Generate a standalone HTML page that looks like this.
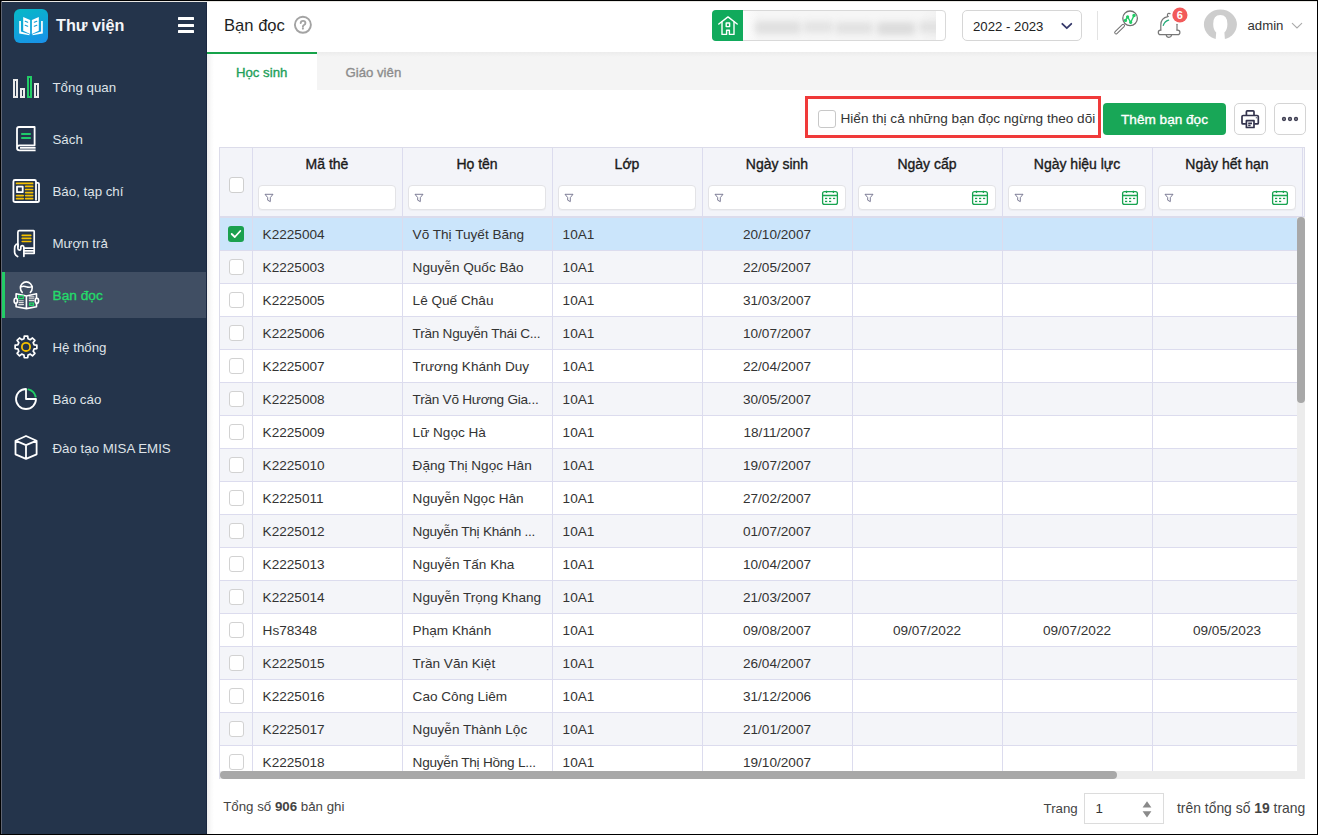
<!DOCTYPE html>
<html><head><meta charset="utf-8"><style>
html,body{margin:0;padding:0;width:1318px;height:835px;overflow:hidden;background:#fff;}
body{position:relative;font-family:"Liberation Sans", sans-serif;}
.t{position:absolute;white-space:nowrap;}
.r{position:absolute;}
.ov{position:absolute;left:0;top:0;}
b{font-weight:700;}
</style></head><body>
<div class="r" style="left:0px;top:0px;width:207px;height:835px;background:#24344b;"></div><div class="r" style="left:1px;top:272px;width:206px;height:46px;background:#404e63;"></div><div class="r" style="left:1px;top:272px;width:4px;height:46px;background:#22cc66;"></div><div class="r" style="left:14px;top:9px;width:34px;height:34px;background:linear-gradient(160deg,#07b9c6 0%,#10a3da 55%,#1a8fea 100%);border-radius:6px;"></div><div class="t" style="left:56px;top:17.49px;font-size:16.2px;font-weight:700;color:#f4f6f8;line-height:16.2px;">Thư viện</div><div class="r" style="left:178px;top:17px;width:16px;height:2.9px;background:#ffffff;border-radius:0.5px;"></div><div class="r" style="left:178px;top:23.7px;width:16px;height:2.9px;background:#ffffff;border-radius:0.5px;"></div><div class="r" style="left:178px;top:30.4px;width:16px;height:2.9px;background:#ffffff;border-radius:0.5px;"></div><div class="t" style="left:52.5px;top:81.44px;font-size:13.3px;font-weight:400;color:#dfe3e8;line-height:13.3px;">Tổng quan</div><div class="t" style="left:52.5px;top:132.94px;font-size:13.3px;font-weight:400;color:#dfe3e8;line-height:13.3px;">Sách</div><div class="t" style="left:52.5px;top:184.64px;font-size:13.3px;font-weight:400;color:#dfe3e8;line-height:13.3px;">Báo, tạp chí</div><div class="t" style="left:52.5px;top:237.34px;font-size:13.3px;font-weight:400;color:#dfe3e8;line-height:13.3px;">Mượn trả</div><div class="t" style="left:52.5px;top:289.20px;font-size:13.7px;font-weight:400;-webkit-text-stroke:0.35px #24dc6a;color:#24dc6a;line-height:13.7px;">Bạn đọc</div><div class="t" style="left:52.5px;top:341.04px;font-size:13.3px;font-weight:400;color:#dfe3e8;line-height:13.3px;">Hệ thống</div><div class="t" style="left:52.5px;top:393.24px;font-size:13.3px;font-weight:400;color:#dfe3e8;line-height:13.3px;">Báo cáo</div><div class="t" style="left:52.5px;top:441.64px;font-size:13.3px;font-weight:400;color:#dfe3e8;line-height:13.3px;">Đào tạo MISA EMIS</div><div class="r" style="left:207px;top:0px;width:1111px;height:52px;background:#ffffff;"></div><div class="t" style="left:224px;top:17.95px;font-size:16.6px;font-weight:400;color:#1f1f1f;line-height:16.6px;">Bạn đọc</div><div class="r" style="left:207px;top:52px;width:1111px;height:38px;background:#f4f4f4;"></div><div class="r" style="left:207px;top:52px;width:1111px;height:5px;background:linear-gradient(#ececec,#f4f4f4);"></div><div class="r" style="left:207px;top:52px;width:110px;height:38px;background:#ffffff;"></div><div class="r" style="left:207px;top:52px;width:110px;height:2px;background:#16a34a;"></div><div class="t" style="left:236px;top:66.23px;font-size:13.2px;font-weight:400;-webkit-text-stroke:0.35px #1ea05a;color:#1ea05a;line-height:13.2px;">Học sinh</div><div class="t" style="left:345.5px;top:65.73px;font-size:13.2px;font-weight:400;-webkit-text-stroke:0.35px #8c8c8c;color:#8c8c8c;line-height:13.2px;">Giáo viên</div><div class="r" style="left:207px;top:90px;width:1111px;height:745px;background:#ffffff;"></div><div class="r" style="left:711.5px;top:10px;width:234px;height:31px;background:#ffffff;border:1px solid #d9d9d9;border-radius:4px;box-sizing:border-box;"></div><div class="r" style="left:711.5px;top:10px;width:31.5px;height:31px;background:#11aa5c;border-radius:4px 0 0 4px;"></div><div class="r" style="left:743px;top:11px;width:193px;height:29px;overflow:hidden;background:linear-gradient(90deg,#fdfdfd,#f6f6f6 8%,#f6f6f6 92%,#f2f2f2)"><div class="r" style="left:12px;top:10px;width:46px;height:13px;background:#e0e0e0;filter:blur(3px);border-radius:4px"></div><div class="r" style="left:60px;top:10px;width:30px;height:12px;background:#e4e4e4;filter:blur(3px);border-radius:4px"></div><div class="r" style="left:92px;top:11px;width:38px;height:12px;background:#e2e2e2;filter:blur(3px);border-radius:4px"></div><div class="r" style="left:134px;top:11px;width:38px;height:13px;background:#dcdcdc;filter:blur(3px);border-radius:4px"></div><div class="r" style="left:176px;top:10px;width:26px;height:12px;background:#e2e2e2;filter:blur(3px);border-radius:4px"></div></div><div class="r" style="left:962px;top:10px;width:120px;height:31px;background:#ffffff;border:1px solid #d6d6d6;border-radius:5px;box-sizing:border-box;"></div><div class="t" style="left:973px;top:19.93px;font-size:13.2px;font-weight:400;color:#222;line-height:13.2px;">2022 - 2023</div><div class="r" style="left:1097px;top:11px;width:1px;height:29px;background:#e3e3e3;"></div><div class="t" style="left:1247.5px;top:19.43px;font-size:13.2px;font-weight:400;color:#333;line-height:13.2px;">admin</div><div class="r" style="left:805px;top:96px;width:296px;height:42px;background:transparent;border:3px solid #f03a3a;box-sizing:border-box;"></div><div class="r" style="left:818px;top:110px;width:17.5px;height:17.5px;background:#fff;border:1px solid #c8c8c8;border-radius:3px;box-sizing:border-box;"></div><div class="t" style="left:840.5px;top:112.09px;font-size:13.6px;font-weight:400;color:#333;line-height:13.6px;">Hiển thị cả những bạn đọc ngừng theo dõi</div><div class="r" style="left:1103px;top:103px;width:123px;height:32px;background:#18a757;border-radius:4px;"></div><div class="t" style="left:1103px;top:112.69px;font-size:13.6px;font-weight:400;-webkit-text-stroke:0.35px #ffffff;color:#ffffff;line-height:13.6px;width:123px;text-align:center;">Thêm bạn đọc</div><div class="r" style="left:1234px;top:103px;width:32px;height:32px;background:#fff;border:1px solid #d4d4d4;border-radius:5px;box-sizing:border-box;"></div><div class="r" style="left:1274px;top:103px;width:32px;height:32px;background:#fff;border:1px solid #d4d4d4;border-radius:5px;box-sizing:border-box;"></div><div class="r" style="left:219px;top:147px;width:1086px;height:632px;background:#ffffff;border:1px solid #dcdcea;box-sizing:border-box;"></div><div class="r" style="left:220px;top:148px;width:1084px;height:69px;background:#f3f4f9;"></div><div class="t" style="left:252px;top:157.15px;font-size:14px;font-weight:400;-webkit-text-stroke:0.35px #1a1a1a;color:#1a1a1a;line-height:14px;width:150px;text-align:center;">Mã thẻ</div><div class="r" style="left:258px;top:185px;width:138px;height:25px;background:#ffffff;border:1px solid #e3e3e6;border-radius:4px;box-sizing:border-box;box-shadow:0 1px 1px rgba(0,0,0,0.03);"></div><div class="t" style="left:402px;top:157.15px;font-size:14px;font-weight:400;-webkit-text-stroke:0.35px #1a1a1a;color:#1a1a1a;line-height:14px;width:150px;text-align:center;">Họ tên</div><div class="r" style="left:408px;top:185px;width:138px;height:25px;background:#ffffff;border:1px solid #e3e3e6;border-radius:4px;box-sizing:border-box;box-shadow:0 1px 1px rgba(0,0,0,0.03);"></div><div class="t" style="left:552px;top:157.15px;font-size:14px;font-weight:400;-webkit-text-stroke:0.35px #1a1a1a;color:#1a1a1a;line-height:14px;width:150px;text-align:center;">Lớp</div><div class="r" style="left:558px;top:185px;width:138px;height:25px;background:#ffffff;border:1px solid #e3e3e6;border-radius:4px;box-sizing:border-box;box-shadow:0 1px 1px rgba(0,0,0,0.03);"></div><div class="t" style="left:702px;top:157.15px;font-size:14px;font-weight:400;-webkit-text-stroke:0.35px #1a1a1a;color:#1a1a1a;line-height:14px;width:150px;text-align:center;">Ngày sinh</div><div class="r" style="left:708px;top:185px;width:138px;height:25px;background:#ffffff;border:1px solid #e3e3e6;border-radius:4px;box-sizing:border-box;box-shadow:0 1px 1px rgba(0,0,0,0.03);"></div><div class="t" style="left:852px;top:157.15px;font-size:14px;font-weight:400;-webkit-text-stroke:0.35px #1a1a1a;color:#1a1a1a;line-height:14px;width:150px;text-align:center;">Ngày cấp</div><div class="r" style="left:858px;top:185px;width:138px;height:25px;background:#ffffff;border:1px solid #e3e3e6;border-radius:4px;box-sizing:border-box;box-shadow:0 1px 1px rgba(0,0,0,0.03);"></div><div class="t" style="left:1002px;top:157.15px;font-size:14px;font-weight:400;-webkit-text-stroke:0.35px #1a1a1a;color:#1a1a1a;line-height:14px;width:150px;text-align:center;">Ngày hiệu lực</div><div class="r" style="left:1008px;top:185px;width:138px;height:25px;background:#ffffff;border:1px solid #e3e3e6;border-radius:4px;box-sizing:border-box;box-shadow:0 1px 1px rgba(0,0,0,0.03);"></div><div class="t" style="left:1152px;top:157.15px;font-size:14px;font-weight:400;-webkit-text-stroke:0.35px #1a1a1a;color:#1a1a1a;line-height:14px;width:150px;text-align:center;">Ngày hết hạn</div><div class="r" style="left:1158px;top:185px;width:138px;height:25px;background:#ffffff;border:1px solid #e3e3e6;border-radius:4px;box-sizing:border-box;box-shadow:0 1px 1px rgba(0,0,0,0.03);"></div><div class="r" style="left:228.5px;top:177px;width:15.5px;height:15.5px;background:#fff;border:1px solid #cfcfcf;border-radius:3px;box-sizing:border-box;"></div><div class="r" style="left:220px;top:217px;width:1084px;height:33px;background:#cbe5fb;"></div><div class="t" style="left:262.6px;top:228.39px;font-size:13.6px;font-weight:400;color:#333;line-height:13.6px;">K2225004</div><div class="t" style="left:412.6px;top:228.39px;font-size:13.6px;font-weight:400;color:#333;line-height:13.6px;">Võ Thị Tuyết Băng</div><div class="t" style="left:562.6px;top:228.39px;font-size:13.6px;font-weight:400;color:#333;line-height:13.6px;">10A1</div><div class="t" style="left:702px;top:228.39px;font-size:13.6px;font-weight:400;color:#333;line-height:13.6px;width:150px;text-align:center;">20/10/2007</div><div class="r" style="left:228px;top:226px;width:16px;height:16px;background:#1aa14f;border-radius:3px;"></div><div class="r" style="left:220px;top:250px;width:1084px;height:33px;background:#f4f5f9;"></div><div class="r" style="left:220px;top:250px;width:1084px;height:1px;background:#dcdcee;"></div><div class="t" style="left:262.6px;top:261.39px;font-size:13.6px;font-weight:400;color:#333;line-height:13.6px;">K2225003</div><div class="t" style="left:412.6px;top:261.39px;font-size:13.6px;font-weight:400;color:#333;line-height:13.6px;">Nguyễn Quốc Bảo</div><div class="t" style="left:562.6px;top:261.39px;font-size:13.6px;font-weight:400;color:#333;line-height:13.6px;">10A1</div><div class="t" style="left:702px;top:261.39px;font-size:13.6px;font-weight:400;color:#333;line-height:13.6px;width:150px;text-align:center;">22/05/2007</div><div class="r" style="left:228.5px;top:259px;width:15.5px;height:15.5px;background:#fff;border:1px solid #d2d2d2;border-radius:3px;box-sizing:border-box;"></div><div class="r" style="left:220px;top:283px;width:1084px;height:33px;background:#ffffff;"></div><div class="r" style="left:220px;top:283px;width:1084px;height:1px;background:#dcdcee;"></div><div class="t" style="left:262.6px;top:294.39px;font-size:13.6px;font-weight:400;color:#333;line-height:13.6px;">K2225005</div><div class="t" style="left:412.6px;top:294.39px;font-size:13.6px;font-weight:400;color:#333;line-height:13.6px;">Lê Quế Châu</div><div class="t" style="left:562.6px;top:294.39px;font-size:13.6px;font-weight:400;color:#333;line-height:13.6px;">10A1</div><div class="t" style="left:702px;top:294.39px;font-size:13.6px;font-weight:400;color:#333;line-height:13.6px;width:150px;text-align:center;">31/03/2007</div><div class="r" style="left:228.5px;top:292px;width:15.5px;height:15.5px;background:#fff;border:1px solid #d2d2d2;border-radius:3px;box-sizing:border-box;"></div><div class="r" style="left:220px;top:316px;width:1084px;height:33px;background:#f4f5f9;"></div><div class="r" style="left:220px;top:316px;width:1084px;height:1px;background:#dcdcee;"></div><div class="t" style="left:262.6px;top:327.39px;font-size:13.6px;font-weight:400;color:#333;line-height:13.6px;">K2225006</div><div class="t" style="left:412.6px;top:327.39px;font-size:13.6px;font-weight:400;color:#333;line-height:13.6px;letter-spacing:-0.25px;">Trần Nguyễn Thái C...</div><div class="t" style="left:562.6px;top:327.39px;font-size:13.6px;font-weight:400;color:#333;line-height:13.6px;">10A1</div><div class="t" style="left:702px;top:327.39px;font-size:13.6px;font-weight:400;color:#333;line-height:13.6px;width:150px;text-align:center;">10/07/2007</div><div class="r" style="left:228.5px;top:325px;width:15.5px;height:15.5px;background:#fff;border:1px solid #d2d2d2;border-radius:3px;box-sizing:border-box;"></div><div class="r" style="left:220px;top:349px;width:1084px;height:33px;background:#ffffff;"></div><div class="r" style="left:220px;top:349px;width:1084px;height:1px;background:#dcdcee;"></div><div class="t" style="left:262.6px;top:360.39px;font-size:13.6px;font-weight:400;color:#333;line-height:13.6px;">K2225007</div><div class="t" style="left:412.6px;top:360.39px;font-size:13.6px;font-weight:400;color:#333;line-height:13.6px;">Trương Khánh Duy</div><div class="t" style="left:562.6px;top:360.39px;font-size:13.6px;font-weight:400;color:#333;line-height:13.6px;">10A1</div><div class="t" style="left:702px;top:360.39px;font-size:13.6px;font-weight:400;color:#333;line-height:13.6px;width:150px;text-align:center;">22/04/2007</div><div class="r" style="left:228.5px;top:358px;width:15.5px;height:15.5px;background:#fff;border:1px solid #d2d2d2;border-radius:3px;box-sizing:border-box;"></div><div class="r" style="left:220px;top:382px;width:1084px;height:33px;background:#f4f5f9;"></div><div class="r" style="left:220px;top:382px;width:1084px;height:1px;background:#dcdcee;"></div><div class="t" style="left:262.6px;top:393.39px;font-size:13.6px;font-weight:400;color:#333;line-height:13.6px;">K2225008</div><div class="t" style="left:412.6px;top:393.39px;font-size:13.6px;font-weight:400;color:#333;line-height:13.6px;letter-spacing:-0.25px;">Trần Võ Hương Gia...</div><div class="t" style="left:562.6px;top:393.39px;font-size:13.6px;font-weight:400;color:#333;line-height:13.6px;">10A1</div><div class="t" style="left:702px;top:393.39px;font-size:13.6px;font-weight:400;color:#333;line-height:13.6px;width:150px;text-align:center;">30/05/2007</div><div class="r" style="left:228.5px;top:391px;width:15.5px;height:15.5px;background:#fff;border:1px solid #d2d2d2;border-radius:3px;box-sizing:border-box;"></div><div class="r" style="left:220px;top:415px;width:1084px;height:33px;background:#ffffff;"></div><div class="r" style="left:220px;top:415px;width:1084px;height:1px;background:#dcdcee;"></div><div class="t" style="left:262.6px;top:426.39px;font-size:13.6px;font-weight:400;color:#333;line-height:13.6px;">K2225009</div><div class="t" style="left:412.6px;top:426.39px;font-size:13.6px;font-weight:400;color:#333;line-height:13.6px;">Lữ Ngọc Hà</div><div class="t" style="left:562.6px;top:426.39px;font-size:13.6px;font-weight:400;color:#333;line-height:13.6px;">10A1</div><div class="t" style="left:702px;top:426.39px;font-size:13.6px;font-weight:400;color:#333;line-height:13.6px;width:150px;text-align:center;">18/11/2007</div><div class="r" style="left:228.5px;top:424px;width:15.5px;height:15.5px;background:#fff;border:1px solid #d2d2d2;border-radius:3px;box-sizing:border-box;"></div><div class="r" style="left:220px;top:448px;width:1084px;height:33px;background:#f4f5f9;"></div><div class="r" style="left:220px;top:448px;width:1084px;height:1px;background:#dcdcee;"></div><div class="t" style="left:262.6px;top:459.39px;font-size:13.6px;font-weight:400;color:#333;line-height:13.6px;">K2225010</div><div class="t" style="left:412.6px;top:459.39px;font-size:13.6px;font-weight:400;color:#333;line-height:13.6px;">Đặng Thị Ngọc Hân</div><div class="t" style="left:562.6px;top:459.39px;font-size:13.6px;font-weight:400;color:#333;line-height:13.6px;">10A1</div><div class="t" style="left:702px;top:459.39px;font-size:13.6px;font-weight:400;color:#333;line-height:13.6px;width:150px;text-align:center;">19/07/2007</div><div class="r" style="left:228.5px;top:457px;width:15.5px;height:15.5px;background:#fff;border:1px solid #d2d2d2;border-radius:3px;box-sizing:border-box;"></div><div class="r" style="left:220px;top:481px;width:1084px;height:33px;background:#ffffff;"></div><div class="r" style="left:220px;top:481px;width:1084px;height:1px;background:#dcdcee;"></div><div class="t" style="left:262.6px;top:492.39px;font-size:13.6px;font-weight:400;color:#333;line-height:13.6px;">K2225011</div><div class="t" style="left:412.6px;top:492.39px;font-size:13.6px;font-weight:400;color:#333;line-height:13.6px;">Nguyễn Ngọc Hân</div><div class="t" style="left:562.6px;top:492.39px;font-size:13.6px;font-weight:400;color:#333;line-height:13.6px;">10A1</div><div class="t" style="left:702px;top:492.39px;font-size:13.6px;font-weight:400;color:#333;line-height:13.6px;width:150px;text-align:center;">27/02/2007</div><div class="r" style="left:228.5px;top:490px;width:15.5px;height:15.5px;background:#fff;border:1px solid #d2d2d2;border-radius:3px;box-sizing:border-box;"></div><div class="r" style="left:220px;top:514px;width:1084px;height:33px;background:#f4f5f9;"></div><div class="r" style="left:220px;top:514px;width:1084px;height:1px;background:#dcdcee;"></div><div class="t" style="left:262.6px;top:525.39px;font-size:13.6px;font-weight:400;color:#333;line-height:13.6px;">K2225012</div><div class="t" style="left:412.6px;top:525.39px;font-size:13.6px;font-weight:400;color:#333;line-height:13.6px;letter-spacing:-0.25px;">Nguyễn Thị Khánh ...</div><div class="t" style="left:562.6px;top:525.39px;font-size:13.6px;font-weight:400;color:#333;line-height:13.6px;">10A1</div><div class="t" style="left:702px;top:525.39px;font-size:13.6px;font-weight:400;color:#333;line-height:13.6px;width:150px;text-align:center;">01/07/2007</div><div class="r" style="left:228.5px;top:523px;width:15.5px;height:15.5px;background:#fff;border:1px solid #d2d2d2;border-radius:3px;box-sizing:border-box;"></div><div class="r" style="left:220px;top:547px;width:1084px;height:33px;background:#ffffff;"></div><div class="r" style="left:220px;top:547px;width:1084px;height:1px;background:#dcdcee;"></div><div class="t" style="left:262.6px;top:558.39px;font-size:13.6px;font-weight:400;color:#333;line-height:13.6px;">K2225013</div><div class="t" style="left:412.6px;top:558.39px;font-size:13.6px;font-weight:400;color:#333;line-height:13.6px;">Nguyễn Tấn Kha</div><div class="t" style="left:562.6px;top:558.39px;font-size:13.6px;font-weight:400;color:#333;line-height:13.6px;">10A1</div><div class="t" style="left:702px;top:558.39px;font-size:13.6px;font-weight:400;color:#333;line-height:13.6px;width:150px;text-align:center;">10/04/2007</div><div class="r" style="left:228.5px;top:556px;width:15.5px;height:15.5px;background:#fff;border:1px solid #d2d2d2;border-radius:3px;box-sizing:border-box;"></div><div class="r" style="left:220px;top:580px;width:1084px;height:33px;background:#f4f5f9;"></div><div class="r" style="left:220px;top:580px;width:1084px;height:1px;background:#dcdcee;"></div><div class="t" style="left:262.6px;top:591.39px;font-size:13.6px;font-weight:400;color:#333;line-height:13.6px;">K2225014</div><div class="t" style="left:412.6px;top:591.39px;font-size:13.6px;font-weight:400;color:#333;line-height:13.6px;">Nguyễn Trọng Khang</div><div class="t" style="left:562.6px;top:591.39px;font-size:13.6px;font-weight:400;color:#333;line-height:13.6px;">10A1</div><div class="t" style="left:702px;top:591.39px;font-size:13.6px;font-weight:400;color:#333;line-height:13.6px;width:150px;text-align:center;">21/03/2007</div><div class="r" style="left:228.5px;top:589px;width:15.5px;height:15.5px;background:#fff;border:1px solid #d2d2d2;border-radius:3px;box-sizing:border-box;"></div><div class="r" style="left:220px;top:613px;width:1084px;height:33px;background:#ffffff;"></div><div class="r" style="left:220px;top:613px;width:1084px;height:1px;background:#dcdcee;"></div><div class="t" style="left:262.6px;top:624.39px;font-size:13.6px;font-weight:400;color:#333;line-height:13.6px;">Hs78348</div><div class="t" style="left:412.6px;top:624.39px;font-size:13.6px;font-weight:400;color:#333;line-height:13.6px;">Phạm Khánh</div><div class="t" style="left:562.6px;top:624.39px;font-size:13.6px;font-weight:400;color:#333;line-height:13.6px;">10A1</div><div class="t" style="left:702px;top:624.39px;font-size:13.6px;font-weight:400;color:#333;line-height:13.6px;width:150px;text-align:center;">09/08/2007</div><div class="t" style="left:852px;top:624.39px;font-size:13.6px;font-weight:400;color:#333;line-height:13.6px;width:150px;text-align:center;">09/07/2022</div><div class="t" style="left:1002px;top:624.39px;font-size:13.6px;font-weight:400;color:#333;line-height:13.6px;width:150px;text-align:center;">09/07/2022</div><div class="t" style="left:1152px;top:624.39px;font-size:13.6px;font-weight:400;color:#333;line-height:13.6px;width:150px;text-align:center;">09/05/2023</div><div class="r" style="left:228.5px;top:622px;width:15.5px;height:15.5px;background:#fff;border:1px solid #d2d2d2;border-radius:3px;box-sizing:border-box;"></div><div class="r" style="left:220px;top:646px;width:1084px;height:33px;background:#f4f5f9;"></div><div class="r" style="left:220px;top:646px;width:1084px;height:1px;background:#dcdcee;"></div><div class="t" style="left:262.6px;top:657.39px;font-size:13.6px;font-weight:400;color:#333;line-height:13.6px;">K2225015</div><div class="t" style="left:412.6px;top:657.39px;font-size:13.6px;font-weight:400;color:#333;line-height:13.6px;">Trần Văn Kiệt</div><div class="t" style="left:562.6px;top:657.39px;font-size:13.6px;font-weight:400;color:#333;line-height:13.6px;">10A1</div><div class="t" style="left:702px;top:657.39px;font-size:13.6px;font-weight:400;color:#333;line-height:13.6px;width:150px;text-align:center;">26/04/2007</div><div class="r" style="left:228.5px;top:655px;width:15.5px;height:15.5px;background:#fff;border:1px solid #d2d2d2;border-radius:3px;box-sizing:border-box;"></div><div class="r" style="left:220px;top:679px;width:1084px;height:33px;background:#ffffff;"></div><div class="r" style="left:220px;top:679px;width:1084px;height:1px;background:#dcdcee;"></div><div class="t" style="left:262.6px;top:690.39px;font-size:13.6px;font-weight:400;color:#333;line-height:13.6px;">K2225016</div><div class="t" style="left:412.6px;top:690.39px;font-size:13.6px;font-weight:400;color:#333;line-height:13.6px;">Cao Công Liêm</div><div class="t" style="left:562.6px;top:690.39px;font-size:13.6px;font-weight:400;color:#333;line-height:13.6px;">10A1</div><div class="t" style="left:702px;top:690.39px;font-size:13.6px;font-weight:400;color:#333;line-height:13.6px;width:150px;text-align:center;">31/12/2006</div><div class="r" style="left:228.5px;top:688px;width:15.5px;height:15.5px;background:#fff;border:1px solid #d2d2d2;border-radius:3px;box-sizing:border-box;"></div><div class="r" style="left:220px;top:712px;width:1084px;height:33px;background:#f4f5f9;"></div><div class="r" style="left:220px;top:712px;width:1084px;height:1px;background:#dcdcee;"></div><div class="t" style="left:262.6px;top:723.39px;font-size:13.6px;font-weight:400;color:#333;line-height:13.6px;">K2225017</div><div class="t" style="left:412.6px;top:723.39px;font-size:13.6px;font-weight:400;color:#333;line-height:13.6px;">Nguyễn Thành Lộc</div><div class="t" style="left:562.6px;top:723.39px;font-size:13.6px;font-weight:400;color:#333;line-height:13.6px;">10A1</div><div class="t" style="left:702px;top:723.39px;font-size:13.6px;font-weight:400;color:#333;line-height:13.6px;width:150px;text-align:center;">21/01/2007</div><div class="r" style="left:228.5px;top:721px;width:15.5px;height:15.5px;background:#fff;border:1px solid #d2d2d2;border-radius:3px;box-sizing:border-box;"></div><div class="r" style="left:220px;top:745px;width:1084px;height:33px;background:#ffffff;"></div><div class="r" style="left:220px;top:745px;width:1084px;height:1px;background:#dcdcee;"></div><div class="t" style="left:262.6px;top:756.39px;font-size:13.6px;font-weight:400;color:#333;line-height:13.6px;">K2225018</div><div class="t" style="left:412.6px;top:756.39px;font-size:13.6px;font-weight:400;color:#333;line-height:13.6px;letter-spacing:-0.25px;">Nguyễn Thị Hồng L...</div><div class="t" style="left:562.6px;top:756.39px;font-size:13.6px;font-weight:400;color:#333;line-height:13.6px;">10A1</div><div class="t" style="left:702px;top:756.39px;font-size:13.6px;font-weight:400;color:#333;line-height:13.6px;width:150px;text-align:center;">19/10/2007</div><div class="r" style="left:228.5px;top:754px;width:15.5px;height:15.5px;background:#fff;border:1px solid #d2d2d2;border-radius:3px;box-sizing:border-box;"></div><div class="r" style="left:220px;top:216px;width:1084px;height:1.5px;background:#dcdcec;"></div><div class="r" style="left:252px;top:148px;width:1px;height:630px;background:#dcdcee;"></div><div class="r" style="left:402px;top:148px;width:1px;height:630px;background:#dcdcee;"></div><div class="r" style="left:552px;top:148px;width:1px;height:630px;background:#dcdcee;"></div><div class="r" style="left:702px;top:148px;width:1px;height:630px;background:#dcdcee;"></div><div class="r" style="left:852px;top:148px;width:1px;height:630px;background:#dcdcee;"></div><div class="r" style="left:1002px;top:148px;width:1px;height:630px;background:#dcdcee;"></div><div class="r" style="left:1152px;top:148px;width:1px;height:630px;background:#dcdcee;"></div><div class="r" style="left:1302px;top:148px;width:1px;height:630px;background:#dcdcee;"></div><div class="r" style="left:220px;top:771px;width:1077px;height:8px;background:#ececec;"></div><div class="r" style="left:220px;top:771px;width:897px;height:8px;background:#a8a8a8;border-radius:4px;"></div><div class="r" style="left:1297px;top:217px;width:8px;height:562px;background:#ececec;"></div><div class="r" style="left:1297px;top:217px;width:8px;height:186px;background:#a8a8a8;border-radius:4px;"></div><div class="t" style="left:223.2px;top:800.34px;font-size:13.3px;font-weight:400;color:#444;line-height:13.3px;">Tổng số <b>906</b> bản ghi</div><div class="t" style="left:1043.5px;top:802.34px;font-size:13.3px;font-weight:400;color:#444;line-height:13.3px;">Trang</div><div class="r" style="left:1084px;top:793px;width:80px;height:31px;background:#fff;border:1px solid #dcdcdc;box-sizing:border-box;"></div><div class="t" style="left:1095.5px;top:802.34px;font-size:13.3px;font-weight:400;color:#333;line-height:13.3px;">1</div><div class="t" style="left:1177px;top:801.83px;font-size:13.9px;font-weight:400;color:#444;line-height:13.9px;">trên tổng số <b>19</b> trang</div><svg class="ov" width="1318" height="835" viewBox="0 0 1318 835"><rect x="14" y="80" width="3" height="17" fill="none" stroke="#eaeaea" stroke-width="2"/><rect x="21" y="89" width="3" height="8" fill="none" stroke="#eaeaea" stroke-width="2"/><rect x="28" y="77" width="3" height="20" fill="none" stroke="#22cc66" stroke-width="2"/><rect x="35" y="84" width="3" height="13" fill="none" stroke="#eaeaea" stroke-width="2"/><g transform="translate(14,9)" fill="#ffffff"><path d="M9.2 8 L16.1 11 L16.1 25 L9.2 21.8 Z"/><path d="M24.8 8 L17.9 11 L17.9 25 L24.8 21.8 Z"/><path d="M5.2 12 H6.9 V22.6 L15.5 25.2 V26.3 L5.2 24.6 Z"/><path d="M28.8 12 H27.1 V22.6 L18.5 25.2 V26.3 L28.8 24.6 Z"/></g><g stroke="#12a0d8" stroke-width="1.1" stroke-linecap="round"><path d="M25.2 21.2 L27.7 22.3 M25.2 25.2 L27.7 26.3 M36.8 21.2 L34.3 22.3 M36.8 25.2 L34.3 26.3"/></g><g fill="none" stroke="#ffffff" stroke-width="1.8" stroke-linejoin="round"><path d="M17 148 V129 Q17 127 19 127 H34.6 V145.3 H19.6 Q17 145.3 17 148 Q17 150.3 19.6 150.3 H35.6"/><path d="M20 147.8 H35.6"/></g><g stroke="#1fc96a" stroke-width="2"><path d="M21.2 134.1 H30.8 M21.2 138.1 H30.8"/></g><g fill="none" stroke="#ffffff" stroke-width="1.8" stroke-linejoin="round"><path d="M36 200.5 V181.5 Q36 180 34.5 180 H15 Q13.4 180 13.4 181.5 V200.2 Q13.4 202 15.2 202 H37.4 Q39 202 39 200.4 V183.9 Q39 182.9 38 182.9 H36"/><rect x="17" y="186.6" width="5.7" height="5.6"/></g><g stroke="#f4c000" stroke-width="1.7" stroke-linecap="round"><path d="M16.6 183.4 H32.6 M25.7 186.4 H32.6 M25.7 189.5 H32.6 M25.7 192.6 H32.6 M25.7 195.6 H32.6 M25.7 198.6 H32.6 M16.6 195.6 H23.2 M16.6 198.6 H23.2"/></g><g fill="none" stroke="#ffffff" stroke-width="1.7" stroke-linejoin="round" stroke-linecap="round"><path d="M17.9 246.5 V232.2 Q17.9 230.7 19.4 230.7 H33.6 Q34.2 230.7 34.2 231.4 V253.3 H23.9"/><path d="M23.9 248.2 H34.2 M23.9 250.8 H34.2"/><path d="M17.9 244 V248.6 Q17.9 250.2 19.5 250.2 Q20.8 250.2 20.8 248.8 V247.3 Q20.8 245.6 22.4 245.6 Q23.9 245.6 23.9 247.3 V256.3"/><path d="M16.4 244.2 Q14.6 245.6 14.6 248.6 V252.2 Q14.6 254.8 17.6 256.6"/></g><g stroke="#f4c000" stroke-width="1.6" stroke-linecap="round"><path d="M22.2 235.4 H30.8 M22.2 238.4 H30.8 M22.2 241.5 H30.8"/></g><g fill="none" stroke="#ffffff" stroke-width="1.6" stroke-linejoin="round" stroke-linecap="round"><path d="M22.2 292.4 A5.9 6.1 0 1 1 30.4 292.4"/><path d="M20.8 286.9 Q23.5 285.6 26.3 286.8 Q29.3 287.9 31.9 286.6"/><path d="M16.1 297.6 V293.7 L26.4 296 L36.5 293.7 V297.8 M36.5 303.6 V306.8 L26.4 308.6 L16.1 306.8 V303.5 M26.4 296 V308.6"/><ellipse cx="15.8" cy="300.8" rx="1.7" ry="2.6"/><ellipse cx="36.9" cy="300.8" rx="1.7" ry="2.6"/><path d="M19 300.7 H23.3 M19 302.6 H23.3 M18.8 304.6 H23.5 M29.3 296.9 H34 M29.3 298.8 H34 M29.3 300.6 H34" stroke-width="1.1" stroke="#dcdcdc"/></g><g fill="none" stroke="#22dd6a" stroke-width="1.2"><rect x="18.6" y="295.9" width="4.7" height="2.7"/><rect x="29.7" y="303.1" width="3.8" height="2.2"/></g><path d="M23.97 338.75 L24.28 336.04 L27.72 336.04 L28.03 338.75 L30.33 339.70 L32.47 338.00 L34.90 340.43 L33.20 342.57 L34.15 344.87 L36.86 345.18 L36.86 348.62 L34.15 348.93 L33.20 351.23 L34.90 353.37 L32.47 355.80 L30.33 354.10 L28.03 355.05 L27.72 357.76 L24.28 357.76 L23.97 355.05 L21.67 354.10 L19.53 355.80 L17.10 353.37 L18.80 351.23 L17.85 348.93 L15.14 348.62 L15.14 345.18 L17.85 344.87 L18.80 342.57 L17.10 340.43 L19.53 338.00 L21.67 339.70 Z" fill="none" stroke="#ffffff" stroke-width="1.7" stroke-linejoin="round"/><circle cx="26" cy="346.9" r="4.1" fill="none" stroke="#f4c000" stroke-width="1.8"/><path d="M26 389 A10 10 0 1 0 36 399 H26 Z" fill="none" stroke="#ffffff" stroke-width="1.8" stroke-linejoin="round"/><path d="M28.4 389.4 A10 10 0 0 1 35.6 396.5" fill="none" stroke="#22cc66" stroke-width="2" stroke-linecap="round"/><g fill="none" stroke="#ffffff" stroke-width="1.8" stroke-linejoin="round"><path d="M26 436 L36.6 440.7 V454.3 L26 458.8 L15.5 454.3 V440.7 Z M15.5 440.7 L26 445.2 L36.6 440.7 M26 445.2 V458.8"/></g><circle cx="302.9" cy="24.8" r="8" fill="none" stroke="#a3a3a3" stroke-width="1.9"/><path d="M300.7 23 Q300.8 20.9 303.1 20.9 Q305.4 20.9 305.4 23 Q305.4 24.3 304 25 Q302.9 25.6 302.9 26.7" fill="none" stroke="#a3a3a3" stroke-width="1.9" stroke-linecap="round"/><circle cx="302.9" cy="28.6" r="1.05" fill="#a3a3a3"/><g fill="none" stroke="#ffffff" stroke-width="1.4" stroke-linejoin="round" stroke-linecap="round"><path d="M718.8 24 L728 16.9 L737.2 24"/><path d="M722 21.7 V34.4 H726.6 V30.2 H729.4 V34.4 H734 V21.7"/><rect x="726.2" y="23" width="3.4" height="3.6"/></g><path d="M1062.3 23.8 L1066.8 28.2 L1071.3 23.8" fill="none" stroke="#35386a" stroke-width="1.8" stroke-linecap="round" stroke-linejoin="round"/><circle cx="1130.1" cy="18.3" r="7.3" fill="none" stroke="#707070" stroke-width="1.3"/><path d="M1123.2 25.6 L1116 32.6" stroke="#707070" stroke-width="3.6" stroke-linecap="round"/><path d="M1123.2 25.6 L1116 32.6" stroke="#ffffff" stroke-width="1.6" stroke-linecap="round"/><g stroke="#22cc66" stroke-width="1.3" fill="#22cc66"><path d="M1125.5 20.4 L1127.6 16.9 L1130.7 22.3 L1134 15.6" fill="none"/><circle cx="1125.5" cy="20.4" r="1"/><circle cx="1127.6" cy="16.9" r="1"/><circle cx="1130.7" cy="22.3" r="1"/><circle cx="1134" cy="15.6" r="1.1"/></g><g fill="none" stroke="#777777" stroke-width="1.2" stroke-linecap="round"><path d="M1160.8 30 V25 Q1160.8 18 1167.8 16.6"/><path d="M1177 24.3 V30"/><path d="M1177 30.2 H1177.6 Q1179.9 30.2 1179.9 32.4 Q1179.9 34.6 1177.6 34.6 H1160.5 Q1158.3 34.6 1158.3 32.4 Q1158.3 30.2 1160.5 30.2 H1160.8"/><path d="M1166.2 34.8 Q1166.6 37.3 1168.9 37.3 Q1171.3 37.3 1171.6 34.8"/><path d="M1168.2 16.4 Q1166.8 15.6 1167.6 14 Q1168.5 12.8 1170 13.6"/></g><path d="M1163.3 25.4 Q1164.6 21.4 1168.6 20.2" fill="none" stroke="#22aa77" stroke-width="1.3" stroke-linecap="round"/><circle cx="1179.9" cy="15" r="7.6" fill="#f25a5a"/><text x="1179.9" y="19" text-anchor="middle" font-family="Liberation Sans" font-size="11" font-weight="700" fill="#ffffff">6</text><ellipse cx="1220.4" cy="24.6" rx="16.5" ry="15" fill="#cdcdcd"/><path d="M1215.6 40.5 L1216.2 32.6 Q1213.2 29.5 1213.2 24 Q1213.2 15.1 1220.3 15.1 Q1227.4 15.1 1227.4 24 Q1227.4 29.5 1224.4 32.6 L1225 40.5 Z" fill="#ffffff"/><path d="M1292.3 23.4 L1297 28 L1301.7 23.4" fill="none" stroke="#aaaaaa" stroke-width="1.1" stroke-linecap="round"/><g fill="none" stroke="#33334d" stroke-width="1.7" stroke-linejoin="round"><path d="M1246.4 115 V111.8 Q1246.4 110.9 1247.3 110.9 H1253.1 Q1254 110.9 1254 111.8 V115"/><path d="M1245.9 123.9 H1243 Q1242 123.9 1242 122.9 V116.6 Q1242 115.5 1243.2 115.5 H1257.1 Q1258.3 115.5 1258.3 116.6 V122.9 Q1258.3 123.9 1257.3 123.9 H1254.4"/><path d="M1246.4 120.7 H1254 V127.5 H1246.4 Z"/><path d="M1248.2 123.3 H1252 M1248.2 125.5 H1250.6"/></g><path d="M1255.8 117.8 H1256.9" stroke="#33334d" stroke-width="1"/><g fill="#7a7a88" stroke="#3e3e52" stroke-width="1.1"><circle cx="1284" cy="119" r="1.6"/><circle cx="1290" cy="119" r="1.6"/><circle cx="1296" cy="119" r="1.6"/></g><path d="M265 194.3 H273 L270.3 197.6 V201.6 L267.7 200.2 V197.6 Z" fill="none" stroke="#6e6e8a" stroke-width="0.9" stroke-linejoin="round"/><path d="M415 194.3 H423 L420.3 197.6 V201.6 L417.7 200.2 V197.6 Z" fill="none" stroke="#6e6e8a" stroke-width="0.9" stroke-linejoin="round"/><path d="M565 194.3 H573 L570.3 197.6 V201.6 L567.7 200.2 V197.6 Z" fill="none" stroke="#6e6e8a" stroke-width="0.9" stroke-linejoin="round"/><path d="M715 194.3 H723 L720.3 197.6 V201.6 L717.7 200.2 V197.6 Z" fill="none" stroke="#6e6e8a" stroke-width="0.9" stroke-linejoin="round"/><g fill="none" stroke="#18a350" stroke-width="1.3"><rect x="822.6" y="191.6" width="14.8" height="12.8" rx="2"/><path d="M822.6 195.5 H837.4 M826.5 190.8 V193 M833.4 190.8 V193"/></g><g fill="#18a350"><rect x="825" y="197.8" width="2.2" height="1.3"/><rect x="829" y="197.8" width="2.2" height="1.3"/><rect x="833" y="197.8" width="2.2" height="1.3"/><rect x="825" y="200.8" width="2.2" height="1.3"/><rect x="829" y="200.8" width="2.2" height="1.3"/></g><path d="M865 194.3 H873 L870.3 197.6 V201.6 L867.7 200.2 V197.6 Z" fill="none" stroke="#6e6e8a" stroke-width="0.9" stroke-linejoin="round"/><g fill="none" stroke="#18a350" stroke-width="1.3"><rect x="972.6" y="191.6" width="14.8" height="12.8" rx="2"/><path d="M972.6 195.5 H987.4 M976.5 190.8 V193 M983.4 190.8 V193"/></g><g fill="#18a350"><rect x="975" y="197.8" width="2.2" height="1.3"/><rect x="979" y="197.8" width="2.2" height="1.3"/><rect x="983" y="197.8" width="2.2" height="1.3"/><rect x="975" y="200.8" width="2.2" height="1.3"/><rect x="979" y="200.8" width="2.2" height="1.3"/></g><path d="M1015 194.3 H1023 L1020.3 197.6 V201.6 L1017.7 200.2 V197.6 Z" fill="none" stroke="#6e6e8a" stroke-width="0.9" stroke-linejoin="round"/><g fill="none" stroke="#18a350" stroke-width="1.3"><rect x="1122.6" y="191.6" width="14.8" height="12.8" rx="2"/><path d="M1122.6 195.5 H1137.4 M1126.5 190.8 V193 M1133.4 190.8 V193"/></g><g fill="#18a350"><rect x="1125" y="197.8" width="2.2" height="1.3"/><rect x="1129" y="197.8" width="2.2" height="1.3"/><rect x="1133" y="197.8" width="2.2" height="1.3"/><rect x="1125" y="200.8" width="2.2" height="1.3"/><rect x="1129" y="200.8" width="2.2" height="1.3"/></g><path d="M1165 194.3 H1173 L1170.3 197.6 V201.6 L1167.7 200.2 V197.6 Z" fill="none" stroke="#6e6e8a" stroke-width="0.9" stroke-linejoin="round"/><g fill="none" stroke="#18a350" stroke-width="1.3"><rect x="1272.6" y="191.6" width="14.8" height="12.8" rx="2"/><path d="M1272.6 195.5 H1287.4 M1276.5 190.8 V193 M1283.4 190.8 V193"/></g><g fill="#18a350"><rect x="1275" y="197.8" width="2.2" height="1.3"/><rect x="1279" y="197.8" width="2.2" height="1.3"/><rect x="1283" y="197.8" width="2.2" height="1.3"/><rect x="1275" y="200.8" width="2.2" height="1.3"/><rect x="1279" y="200.8" width="2.2" height="1.3"/></g><path d="M231.7 234 L234.8 237 L240.3 231" fill="none" stroke="#ffffff" stroke-width="1.8" stroke-linecap="round" stroke-linejoin="round"/><path d="M1142.6 807.6 L1147 801.3 L1151.4 807.6 Z M1142.6 811.2 L1147 817.5 L1151.4 811.2 Z" fill="#8a8a8a"/></svg><div class="r" style="left:207px;top:54px;width:7px;height:781px;background:linear-gradient(90deg,rgba(0,0,0,0.065),rgba(0,0,0,0.02) 60%,rgba(0,0,0,0));"></div><div class="r" style="left:206px;top:0px;width:1px;height:835px;background:#1a2740;"></div><div class="r" style="left:0px;top:1px;width:1318px;height:1px;background:#e9e8e4;"></div><div class="r" style="left:1px;top:0px;width:1px;height:835px;background:#606572;"></div><div class="r" style="left:0px;top:0px;width:1318px;height:1px;background:#000;"></div><div class="r" style="left:0px;top:834px;width:1318px;height:1px;background:#000;"></div><div class="r" style="left:0px;top:0px;width:1px;height:835px;background:#000;"></div><div class="r" style="left:1317px;top:0px;width:1px;height:835px;background:#000;"></div>
</body></html>
